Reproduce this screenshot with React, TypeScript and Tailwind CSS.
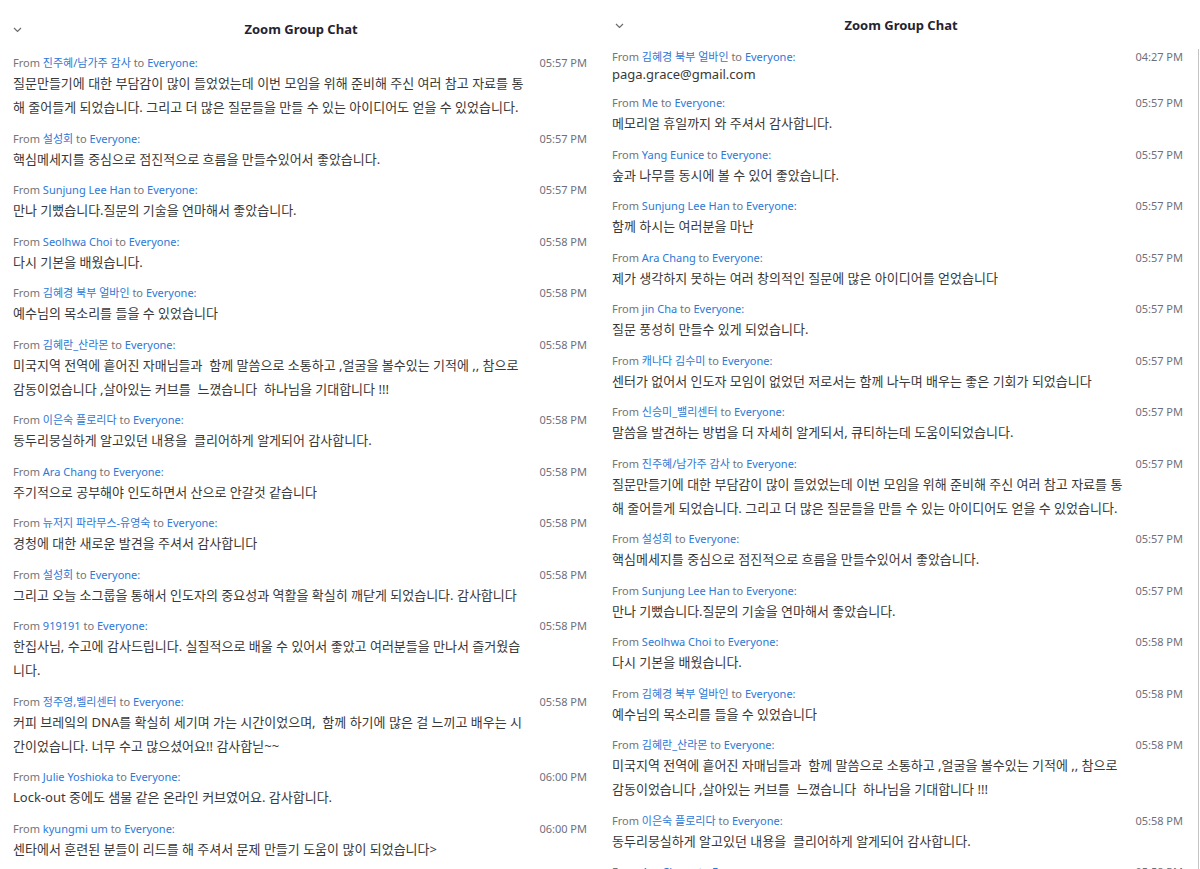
import React from 'react';

type Message = {
  name: string;
  time: string;
  lines: string[];
  tight?: boolean;
};

const leftMessages: Message[] = [
  {
    name: '진주혜/남가주 감사',
    time: '05:57 PM',
    lines: [
      '질문만들기에 대한 부담감이 많이 들었었는데 이번 모임을 위해 준비해 주신 여러 참고 자료를 통',
      '해 줄어들게 되었습니다. 그리고 더 많은 질문들을 만들 수 있는 아이디어도 얻을 수 있었습니다.',
    ],
  },
  { name: '설성회', time: '05:57 PM', lines: ['핵심메세지를 중심으로 점진적으로 흐름을 만들수있어서 좋았습니다.'] },
  { name: 'Sunjung Lee Han', time: '05:57 PM', lines: ['만나 기뻤습니다.질문의 기술을 연마해서 좋았습니다.'] },
  { name: 'Seolhwa Choi', time: '05:58 PM', lines: ['다시 기본을 배웠습니다.'] },
  { name: '김혜경 북부 얼바인', time: '05:58 PM', lines: ['예수님의 목소리를 들을 수 있었습니다'] },
  {
    name: '김혜란_산라몬',
    time: '05:58 PM',
    lines: [
      '미국지역 전역에 흩어진 자매님들과  함께 말씀으로 소통하고 ,얼굴을 볼수있는 기적에 ,, 참으로',
      '감동이었습니다 ,살아있는 커브를  느꼈습니다  하나님을 기대합니다 !!!',
    ],
  },
  { name: '이은숙 플로리다', time: '05:58 PM', lines: ['동두리뭉실하게 알고있던 내용을  클리어하게 알게되어 감사합니다.'] },
  { name: 'Ara Chang', time: '05:58 PM', lines: ['주기적으로 공부해야 인도하면서 산으로 안갈것 같습니다'] },
  { name: '뉴저지 파라무스-유영숙', time: '05:58 PM', lines: ['경청에 대한 새로운 발견을 주셔서 감사합니다'] },
  {
    name: '설성회',
    time: '05:58 PM',
    lines: ['그리고 오늘 소그룹을 통해서 인도자의 중요성과 역활을 확실히 깨닫게 되었습니다. 감사합니다'],
  },
  {
    name: '919191',
    time: '05:58 PM',
    lines: ['한집사님, 수고에 감사드립니다. 실질적으로 배울 수 있어서 좋았고 여러분들을 만나서 즐거웠습', '니다.'],
  },
  {
    name: '정주영,벨리센터',
    time: '05:58 PM',
    lines: [
      '커피 브레잌의 DNA를 확실히 세기며 가는 시간이었으며,  함께 하기에 많은 걸 느끼고 배우는 시',
      '간이었습니다. 너무 수고 많으셨어요!! 감사합닏~~',
    ],
  },
  { name: 'Julie Yoshioka', time: '06:00 PM', lines: ['Lock-out 중에도 샘물 같은 온라인 커브였어요. 감사합니다.'] },
  { name: 'kyungmi um', time: '06:00 PM', lines: ['센타에서 훈련된 분들이 리드를 해 주셔서 문제 만들기 도움이 많이 되었습니다>'] },
];

const rightMessages: Message[] = [
  { name: '김혜경 북부 얼바인', time: '04:27 PM', lines: ['paga.grace@gmail.com'], tight: true },
  { name: 'Me', time: '05:57 PM', lines: ['메모리얼 휴일까지 와 주셔서 감사합니다.'] },
  { name: 'Yang Eunice', time: '05:57 PM', lines: ['숲과 나무를 동시에 볼 수 있어 좋았습니다.'] },
  { name: 'Sunjung Lee Han', time: '05:57 PM', lines: ['함께 하시는 여러분을 마난'] },
  { name: 'Ara Chang', time: '05:57 PM', lines: ['제가 생각하지 못하는 여러 창의적인 질문에 많은 아이디어를 얻었습니다'] },
  { name: 'jin Cha', time: '05:57 PM', lines: ['질문 풍성히 만들수 있게 되었습니다.'] },
  {
    name: '캐나다 김수미',
    time: '05:57 PM',
    lines: ['센터가 없어서 인도자 모임이 없었던 저로서는 함께 나누며 배우는 좋은 기회가 되었습니다'],
  },
  { name: '신승미_밸리센터', time: '05:57 PM', lines: ['말씀을 발견하는 방법을 더 자세히 알게되서, 큐티하는데 도움이되었습니다.'] },
  leftMessages[0],
  leftMessages[1],
  leftMessages[2],
  leftMessages[3],
  leftMessages[4],
  leftMessages[5],
  leftMessages[6],
  leftMessages[7],
];

function Chevron() {
  return (
    <svg width="9" height="6" viewBox="0 0 9 6" className="shrink-0">
      <polyline points="1,1 4.5,4.5 8,1" fill="none" stroke="#6b6b6b" strokeWidth="1.2" />
    </svg>
  );
}

function ChatMessage({ msg }: { msg: Message }) {
  return (
    <div className={msg.tight ? 'pb-[9px]' : 'pb-[11.5px]'}>
      <div className="flex items-center justify-between h-[16px] text-[11px] leading-[16px] text-[#747474]">
        <span className="whitespace-pre">
          From <span className="text-[#2d78d6]">{msg.name}</span> to{' '}
          <span className="text-[#2d78d6]">Everyone:</span>
        </span>
        <span className="text-[#6f6f7c]">{msg.time}</span>
      </div>
      <div className={`text-[13px] leading-[24px] text-[#383838] ${msg.tight ? 'mt-[-3px]' : ''}`}>
        {msg.lines.map((line, i) => (
          <div key={i} className="whitespace-pre">
            {line}
          </div>
        ))}
      </div>
    </div>
  );
}

function ChatPanel({
  messages,
  headerClass,
  bodyClass,
}: {
  messages: Message[];
  headerClass: string;
  bodyClass: string;
}) {
  return (
    <div className="flex flex-col h-full">
      <div className={`relative flex items-center ${headerClass}`}>
        <div className="absolute left-[13px]">
          <Chevron />
        </div>
        <div className="w-full text-center text-[13px] font-bold text-[#232333]">Zoom Group Chat</div>
      </div>
      <div className={`flex-1 overflow-hidden ${bodyClass}`}>
        {messages.map((m, i) => (
          <ChatMessage key={i} msg={m} />
        ))}
      </div>
    </div>
  );
}

export default function App() {
  return (
    <div
      className="w-[1200px] h-[869px] overflow-hidden bg-white flex"
      style={{ fontFamily: '"Noto Sans", "Noto Sans CJK KR", sans-serif' }}
    >
      <div className="w-[602px] h-full">
        <ChatPanel
          messages={leftMessages}
          headerClass="h-[55px] pt-[4px]"
          bodyClass="pl-[13px] pr-[15px]"
        />
      </div>
      <div className="flex-1 h-full">
        <ChatPanel
          messages={rightMessages}
          headerClass="h-[49px] pt-[3px]"
          bodyClass="pl-[10px] pr-[15px] mr-[1px] border-r border-[#c4c4c4]"
        />
      </div>
    </div>
  );
}
